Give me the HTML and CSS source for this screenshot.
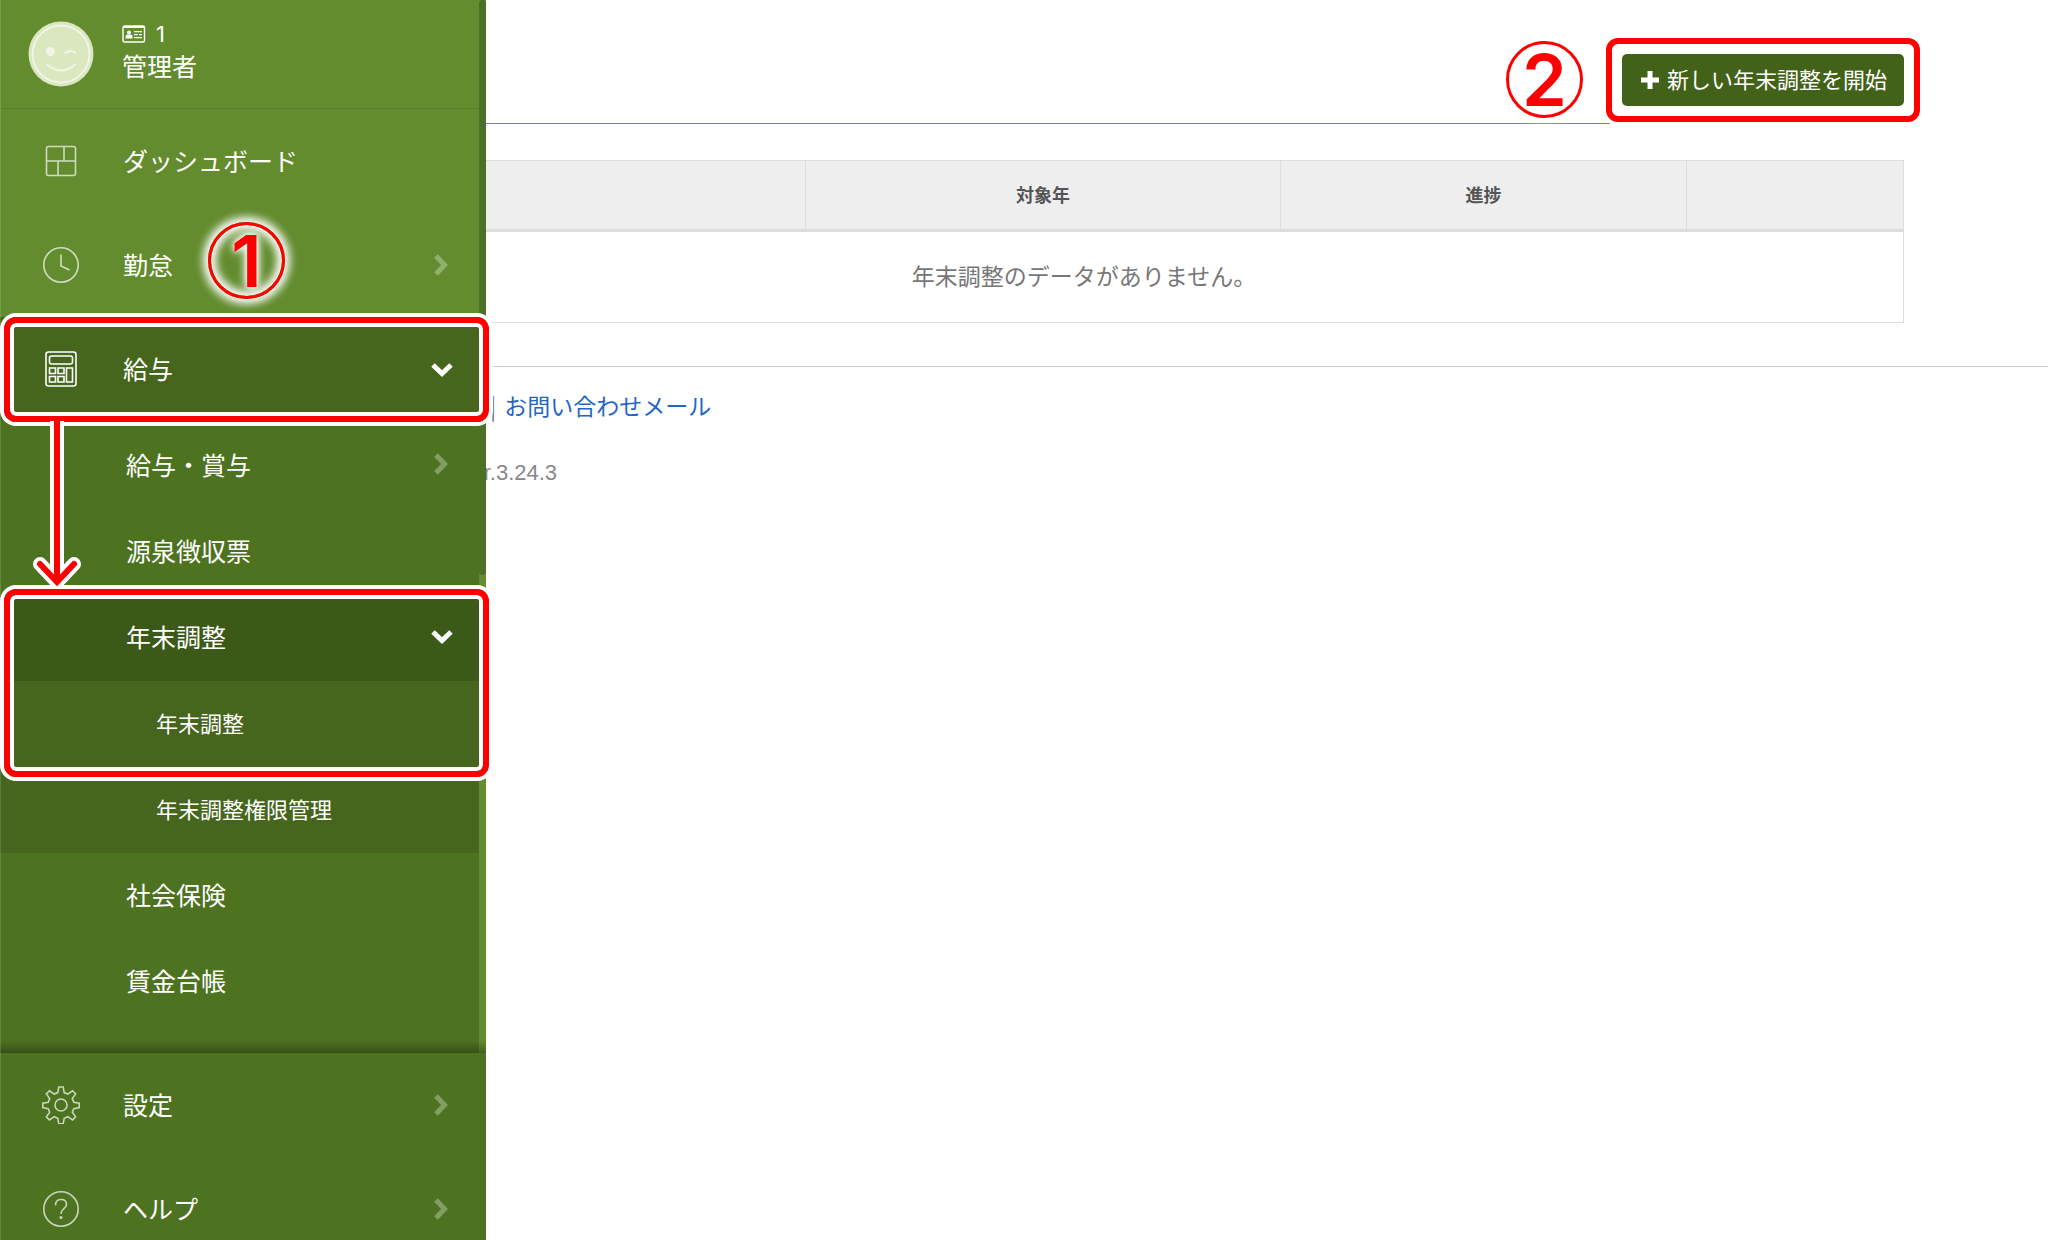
FILE: index.html
```html
<!DOCTYPE html>
<html lang="ja">
<head>
    <meta charset="UTF-8">
    <meta name="viewport" content="width=device-width, initial-scale=1.0">
    <title>年末調整</title>
    <link rel="stylesheet" href="styles.css">
</head>
<body>
    <!-- Sidebar -->
    <aside class="sidebar">
        <div class="sidebar-scroll">
            <div class="sidebar-body">
                <div class="profile">
                    <svg class="avatar" viewBox="0 0 66 66">
                        <circle cx="33" cy="33" r="32.5" fill="#dae7bf"/>
                        <circle cx="33" cy="33" r="28.5" fill="none" stroke="#f1f4e9" stroke-width="2"/>
                        <circle cx="22.5" cy="30.500" r="4.500" fill="#f1f4e9"/>
                        <path d="M37.500 32q4.500-4 9.500-.5M19.500 44q13.500 11 27 0" fill="none" stroke="#f1f4e9" stroke-width="2.200" stroke-linecap="round"/>
                    </svg>
                    <div class="profile-text">
                        <div class="profile-id">
                            <svg class="id-card" viewBox="0 0 24 18">
                                <rect x="1" y="1" width="21.500" height="16" rx="1.500" fill="none" stroke="#fff" stroke-width="1.400"/>
                                <path d="M1 1h21.500v2H1z" fill="#fff"/>
                                <circle cx="7" cy="7.500" r="2" fill="#fff"/>
                                <path d="M3.500 13.500v-2q0-2 2-2h3q2 0 2 2v2zM12 6h8v1.200h-8zM12 9h4v1.200h-4zM17 9h3v1.200h-3zM12 12h8v1.200h-8z" fill="#fff"/>
                            </svg>
                            <span>1</span>
                        </div>
                        <div class="profile-name">管理者</div>
                    </div>
                </div>

                <nav>
                    <ul class="menu">
                        <li>
                            <a href="#" class="menu-link">
                                <svg class="menu-icon" viewBox="0 0 38 38"><path d="M6.500 4.500h25q2 0 2 2v25q0 2-2 2h-25q-2 0-2-2v-25q0-2 2-2zM4.500 19h29M22 4.500V19M16 19v14.500"/></svg>
                                <span>ダッシュボード</span>
                            </a>
                        </li>
                        <li>
                            <a href="#" class="menu-link">
                                <svg class="menu-icon" viewBox="0 0 38 38"><circle cx="19" cy="19" r="17.200"/><path d="M19 8.500V20l8.500 4"/></svg>
                                <span>勤怠</span>
                                <svg class="arrow" viewBox="0 0 22 22"><path d="M5 2l8.500 9L5 20"/></svg>
                            </a>
                        </li>
                        <li>
                            <a href="#" class="menu-link active">
                                <svg class="menu-icon" viewBox="0 0 38 38"><rect x="4" y="2" width="30" height="34" rx="2.500"/><rect x="7.500" y="6" width="23" height="8" rx="2"/><path d="M7.500 18h6v5.500h-6zM16 18h6v5.500h-6zM24.500 18h6v14h-6zM7.500 26.500h6V32h-6zM16 26.500h6V32h-6z"/></svg>
                                <span>給与</span>
                                <svg class="arrow" viewBox="0 0 22 22"><path d="M2 7l9 8.500L20 7"/></svg>
                            </a>
                            <ul class="submenu">
                                <li>
                                    <a href="#" class="sub-link">
                                        <span>給与・賞与</span>
                                        <svg class="arrow" viewBox="0 0 22 22"><path d="M5 2l8.500 9L5 20"/></svg>
                                    </a>
                                </li>
                                <li><a href="#" class="sub-link">源泉徴収票</a></li>
                                <li>
                                    <a href="#" class="sub-link active">
                                        <span>年末調整</span>
                                        <svg class="arrow" viewBox="0 0 22 22"><path d="M2 7l9 8.500L20 7"/></svg>
                                    </a>
                                    <ul class="submenu-inner">
                                        <li><a href="#" class="inner-link">年末調整</a></li>
                                        <li><a href="#" class="inner-link">年末調整権限管理</a></li>
                                    </ul>
                                </li>
                                <li><a href="#" class="sub-link">社会保険</a></li>
                                <li><a href="#" class="sub-link">賃金台帳</a></li>
                            </ul>
                        </li>
                    </ul>
                </nav>
            </div>
            <div class="scroll-track"><div class="scroll-thumb"></div></div>
        </div>

        <ul class="menu menu-bottom">
            <li>
                <a href="#" class="menu-link">
                    <svg class="menu-icon" viewBox="0 0 38 38"><circle cx="19" cy="19" r="6"/><path d="M16.800 1h4.400l1 5.600 3.600 1.500 4.700-3.300 3.100 3.100-3.300 4.700 1.500 3.600 5.400 1v4.400l-5.400 1-1.500 3.600 3.300 4.700-3.100 3.100-4.700-3.300-3.600 1.500-1 5.600h-4.400l-1-5.600-3.600-1.500-4.700 3.300-3.100-3.100 3.300-4.700-1.500-3.600-5.400-1v-4.400l5.400-1 1.500-3.600-3.300-4.700 3.100-3.100 4.700 3.300 3.600-1.500z"/></svg>
                    <span>設定</span>
                    <svg class="arrow" viewBox="0 0 22 22"><path d="M5 2l8.500 9L5 20"/></svg>
                </a>
            </li>
            <li>
                <a href="#" class="menu-link">
                    <svg class="menu-icon" viewBox="0 0 38 38"><circle cx="19" cy="19" r="17.200"/><path d="M13.500 15.500q0-6 5.500-6t5.500 5q0 2.500-3 4.500-2.500 2-2.500 5"/><circle cx="19" cy="27.500" r=".8"/></svg>
                    <span>ヘルプ</span>
                    <svg class="arrow" viewBox="0 0 22 22"><path d="M5 2l8.500 9L5 20"/></svg>
                </a>
            </li>
        </ul>
    </aside>

    <!-- Page -->
    <div class="page">
        <main>
            <header class="page-header">
                <div class="start">
                    <button type="button" class="btn">
                        <svg class="plus" viewBox="0 0 20 20"><path d="M7.500 1h5v6.500H19v5h-6.500V19h-5v-6.500H1v-5h6.500z"/></svg>
                        <span>新しい年末調整を開始</span>
                    </button>
                    <div class="step step-two">2</div>
                </div>
            </header>

            <table class="list">
                <colgroup>
                    <col class="col-name">
                    <col class="col-year">
                    <col class="col-progress">
                    <col class="col-action">
                </colgroup>
                <thead>
                    <tr>
                        <th></th>
                        <th>対象年</th>
                        <th>進捗</th>
                        <th></th>
                    </tr>
                </thead>
                <tbody>
                    <tr>
                        <td colspan="4">年末調整のデータがありません。</td>
                    </tr>
                </tbody>
            </table>
        </main>

        <footer>
            <p class="footer-links"><span>|</span><a href="#">お問い合わせメール</a></p>
            <p class="version">Ver.3.24.3</p>
        </footer>
    </div>

    <!-- Steps drawn over the sidebar -->
    <div class="step step-one">1</div>
    <div class="frame frame-payroll"></div>
    <div class="frame frame-adjust"></div>
    <svg class="step-arrow" viewBox="0 0 54 168">
        <path d="M27 0V158M10 143l17 18 17-18" stroke="#fff" stroke-width="14"/>
        <path d="M27 0V158M10 143l17 18 17-18" stroke="#f00" stroke-width="6"/>
    </svg>
</body>
</html>
```

FILE: styles.css
```css
/* Base */
* {
    box-sizing: border-box;
}

body, html {
    margin: 0;
    padding: 0;
    height: 100%;
    overflow: hidden;
    font-family: "Noto Sans CJK JP", sans-serif;
    color: #777;
    background: #fff;
}

body {
    position: relative;
}

ul {
    list-style: none;
    margin: 0;
    padding: 0;
}

/* Sidebar */
.sidebar {
    position: fixed;
    top: 0;
    left: 0;
    z-index: 1;
    display: flex;
    flex-direction: column;
    width: 486px;
    height: 100vh;
    overflow: hidden;
    color: #fff;
    background: #628c2e;
}

.sidebar::after {
    content: '';
    position: absolute;
    top: 0;
    left: 0;
    width: 1px;
    height: 100%;
    background: rgba(255, 255, 255, 0.15);
}

.sidebar-scroll {
    position: relative;
    display: flex;
    flex: 1;
    min-height: 0;
    overflow: hidden;
}

.sidebar-scroll::after {
    content: '';
    position: absolute;
    left: 0;
    right: 0;
    bottom: 0;
    height: 13px;
    background: linear-gradient(rgba(0, 0, 0, 0), rgba(0, 0, 0, 0.3));
}

.sidebar-body {
    flex: 1;
}

.scroll-track {
    width: 7px;
    background: #628c2e;
}

.scroll-thumb {
    height: 575px;
    border-radius: 4px;
    background: #4d7026;
}

.profile {
    display: flex;
    gap: 28px;
    height: 109px;
    padding: 21px 0 0 28px;
    border-bottom: 1px solid #588029;
}

.avatar {
    width: 66px;
    height: 66px;
}

.profile-id {
    display: flex;
    align-items: center;
    gap: 10px;
    height: 26px;
    font-family: Inter, sans-serif;
    font-size: 22px;
}

.id-card {
    width: 24px;
    height: 18px;
}

.profile-name {
    font-size: 25px;
    line-height: 36px;
}

/* Menu */
.menu-link, .sub-link, .inner-link {
    display: flex;
    align-items: center;
    color: #fff;
    text-decoration: none;
    font-size: 25px;
}

.menu-link {
    height: 104px;
    padding: 0 26px 0 42px;
}

.menu-link span {
    padding-bottom: 2px;
}

.menu-link.active {
    background: #45661c;
}

.menu-icon {
    width: 38px;
    height: 38px;
    margin-right: 43px;
    fill: none;
    stroke: #fff;
    stroke-width: 1.6;
    opacity: 0.7;
}

.active .menu-icon {
    opacity: 1;
}

.arrow {
    width: 22px;
    height: 22px;
    margin-left: auto;
    fill: none;
    stroke: #fff;
    stroke-width: 5;
    opacity: 0.3;
}

.active .arrow {
    opacity: 1;
}

.submenu {
    padding: 2px 0 40px;
    background: #4d7321;
}

.sub-link, .inner-link {
    height: 86px;
    padding: 0 26px 5px 126px;
}

.sub-link.active {
    background: #3b5917;
}

.submenu-inner {
    background: #45661c;
}

.inner-link {
    padding-left: 156px;
    font-size: 22px;
}

.menu-bottom {
    flex-shrink: 0;
    margin-bottom: -21px;
    background: #4d7321;
}

.menu-bottom .menu-link {
    padding-right: 33px;
}

/* Page */
.page {
    margin-left: 120px;
}

main {
    padding: 0 144px;
}

.page-header {
    display: flex;
    justify-content: flex-end;
    height: 124px;
    padding-top: 54px;
    border-bottom: 1px solid #76963a;
}

.start {
    position: relative;
    height: 52px;
}

.btn {
    display: flex;
    align-items: center;
    gap: 7px;
    height: 52px;
    padding: 0 17px 0 18px;
    border: 0;
    border-radius: 5px;
    color: #fff;
    background: #426219;
    font-family: inherit;
    font-size: 22px;
    cursor: pointer;
}

.btn span {
    padding-bottom: 4px;
}

.plus {
    width: 20px;
    height: 20px;
    fill: #fff;
}

/* Red frame round the button */
.start::after {
    content: '';
    position: absolute;
    inset: -16px;
    border: 6px solid #f00;
    border-radius: 12px;
    box-shadow: 0 0 0 4px #fff;
    pointer-events: none;
}

.list {
    width: 100%;
    margin-top: 36px;
    border-collapse: collapse;
    table-layout: fixed;
    border: 1px solid #ddd;
}

.col-name {
    width: 33%;
}

.col-year {
    width: 29%;
}

.col-action {
    width: 217px;
}

.list th {
    height: 70px;
    padding: 0 0 3px;
    border: 1px solid #ddd;
    border-bottom: 3px solid #ddd;
    color: #555;
    background: #eee;
    font-size: 18px;
}

.list td {
    height: 92px;
    padding: 0 0 4px;
    font-size: 23px;
    text-align: center;
}

footer {
    margin-top: 43px;
    padding: 20px 0 0 338px;
    border-top: 1px solid #ccc;
}

footer p {
    margin: 0;
}

.footer-links {
    display: flex;
    gap: 8px;
    padding-left: 32px;
    font-size: 23px;
    line-height: 36px;
}

.footer-links a {
    color: #1f66c7;
    text-decoration: none;
}

.version {
    margin-top: 33px;
    color: #888;
    font-family: "Liberation Sans", sans-serif;
    font-size: 22px;
    line-height: 34px;
}

/* Steps */
.step {
    position: absolute;
    display: flex;
    align-items: center;
    justify-content: center;
    width: 77px;
    height: 77px;
    border: 3px solid #f00;
    border-radius: 50%;
    color: #f00;
    font-family: Inter, sans-serif;
    font-size: 72px;
    font-weight: 600;
    line-height: 72px;
}

.step-one {
    top: 222px;
    left: 208px;
    z-index: 2;
    box-shadow: 0 0 9px 5px #fff, inset 0 0 9px 5px #fff;
    text-shadow: 0 0 4px #fff, 0 0 8px #fff, 0 0 12px #fff;
}

.step-two {
    top: -13px;
    right: 321px;
    box-shadow: 0 0 6px 4px rgba(255, 255, 255, 0.7);
}

.frame {
    position: absolute;
    left: 4px;
    z-index: 2;
    width: 485px;
    border: 6px solid #f00;
    border-radius: 12px;
    box-shadow: 0 0 0 4px #fff, inset 0 0 0 4px #fff;
}

.frame-payroll {
    top: 317px;
    height: 105px;
}

.frame-adjust {
    top: 589px;
    height: 188px;
}

.step-arrow {
    position: absolute;
    top: 421px;
    left: 30px;
    z-index: 2;
    width: 54px;
    height: 168px;
    fill: none;
    stroke-linecap: round;
}
```
